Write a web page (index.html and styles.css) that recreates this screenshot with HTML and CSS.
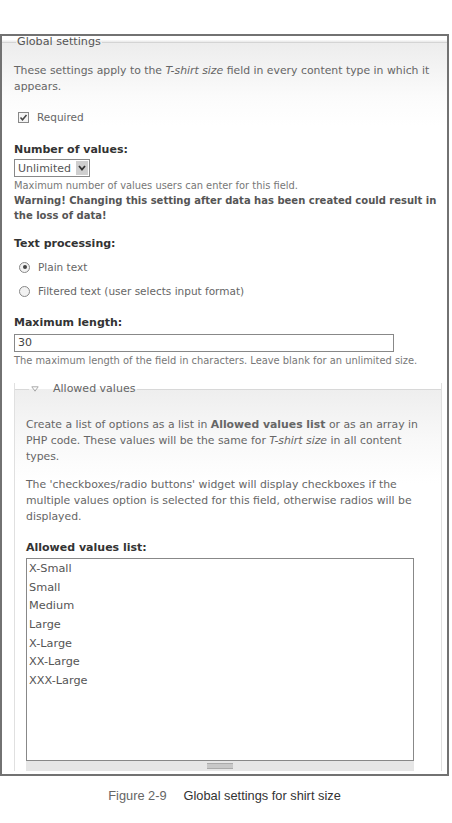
FILE: index.html
```html
<!DOCTYPE html>
<html>
<head>
<meta charset="utf-8">
<link rel="stylesheet" href="styles.css">
</head>
<body>
<div class="frame">
  <div class="gs-head"><span class="gs-title">Global settings</span></div>
  <div class="gs-body">
    <p class="intro">These settings apply to the <em>T-shirt size</em> field in every content type in which it appears.</p>
    <div class="option req"><span class="checkbox"><svg viewBox="0 0 11 11" width="11" height="11"><path d="M2.5 5.5 L4.5 7.8 L8.5 3" fill="none" stroke="#444" stroke-width="1.5"/></svg></span><span>Required</span></div>

    <div class="label lbl-num">Number of values:</div>
    <div class="select"><span class="select-val">Unlimited</span><span class="select-btn"><svg viewBox="0 0 10 8" width="10" height="8"><path d="M2 2 L5 5.5 L8 2" fill="none" stroke="#333" stroke-width="1.8"/></svg></span></div>
    <div class="desc">Maximum number of values users can enter for this field.</div>
    <div class="warn">Warning! Changing this setting after data has been created could result in the loss of data!</div>

    <div class="label lbl-tp">Text processing:</div>
    <div class="option radio-row first"><span class="radio checked"></span><span>Plain text</span></div>
    <div class="option radio-row"><span class="radio"></span><span>Filtered text (user selects input format)</span></div>

    <div class="label lbl-ml">Maximum length:</div>
    <div class="textinput">30</div>
    <div class="desc desc-ml">The maximum length of the field in characters. Leave blank for an unlimited size.</div>

    <div class="av">
      <div class="av-head"><span class="av-title"><span class="tri"><svg viewBox="0 0 8 6" width="8" height="6"><path d="M0.8 0.8 H7.2 L4 5.2 Z" fill="none" stroke="#aaa" stroke-width="1"/></svg></span>Allowed values</span></div>
      <div class="av-body">
        <p class="av-p1">Create a list of options as a list in <b>Allowed values list</b> or as an array in PHP code. These values will be the same for <em>T-shirt size</em> in all content types.</p>
        <p class="av-p2">The 'checkboxes/radio buttons' widget will display checkboxes if the multiple values option is selected for this field, otherwise radios will be displayed.</p>
        <div class="label lbl-av">Allowed values list:</div>
        <div class="textarea">X-Small<br>Small<br>Medium<br>Large<br>X-Large<br>XX-Large<br>XXX-Large</div>
        <div class="grippie"><span class="grip"></span></div>
      </div>
    </div>
  </div>
</div>
<div class="caption"><span class="fig">Figure 2-9</span><span class="cap">Global settings for shirt size</span></div>
</body>
</html>
```

FILE: styles.css
```css
html, body {
  margin: 0;
  padding: 0;
  background: #fff;
}
body {
  font-family: "DejaVu Sans", Verdana, sans-serif;
  color: #666;
  font-size: 10.85px;
}
.frame {
  box-sizing: border-box;
  margin-top: 34px;
  width: 449px;
  height: 742px;
  border: 2px solid #727272;
  overflow: hidden;
  background: linear-gradient(#fff 0, #fff 4px, #ececec 5px, #fbfbfb 60px, #fff 90px);
}
.gs-head {
  display: flex;
  align-items: center;
  height: 12px;
}
.gs-head::before {
  content: "";
  width: 14px;
  border-top: 1px solid #d4d4d4;
}
.gs-head::after {
  content: "";
  flex: 1;
  border-top: 1px solid #d4d4d4;
}
.gs-title {
  padding: 0 1px;
  color: #555;
  font-size: 11.2px;
  line-height: 12px;
}
.gs-body {
  padding-left: 12px;
}
p {
  margin: 0;
}
.intro {
  margin-top: 15px;
  line-height: 16px;
  width: 425px;
}
.option {
  display: flex;
  align-items: center;
  height: 16px;
  line-height: 16px;
  font-size: 10.5px;
}
.req {
  margin-top: 14px;
  padding-left: 4px;
}
.checkbox {
  box-sizing: border-box;
  width: 11px;
  height: 11px;
  border: 1px solid #888;
  background: #f4f4f4;
  margin-right: 8px;
  display: flex;
}
.checkbox svg {
  margin: -1px;
}
.label {
  font-weight: bold;
  color: #333;
  font-size: 11px;
  line-height: 16px;
}
.lbl-num { margin-top: 17px; }
.select {
  box-sizing: border-box;
  margin-top: 1px;
  width: 76px;
  height: 18px;
  border: 1px solid #888;
  display: flex;
  align-items: center;
  justify-content: space-between;
  background: #fff;
  font-size: 11px;
  color: #555;
}
.select-val {
  padding-left: 3px;
}
.select-btn {
  width: 12px;
  height: 14px;
  margin-right: 1px;
  background: #cfcfcf;
  display: flex;
  align-items: center;
  justify-content: center;
}
.desc {
  font-size: 9.9px;
  line-height: 15px;
  color: #777;
  margin-top: 1px;
}
.desc-ml {
  margin-top: 1px;
}
.warn {
  font-size: 10px;
  line-height: 15px;
  font-weight: bold;
  color: #555;
  width: 425px;
}
.lbl-tp { margin-top: 13px; }
.radio-row {
  margin-top: 8px;
  padding-left: 5px;
}
.radio-row.first {
  margin-top: 7px;
}
.radio {
  box-sizing: border-box;
  width: 11px;
  height: 11px;
  border-radius: 50%;
  border: 1px solid #888;
  background: #f2f2f2;
  margin-right: 8px;
  position: relative;
}
.radio.checked::after {
  content: "";
  position: absolute;
  left: 2.5px;
  top: 2.5px;
  width: 4px;
  height: 4px;
  border-radius: 50%;
  background: #444;
}
.lbl-ml { margin-top: 16px; }
.textinput {
  box-sizing: border-box;
  margin-top: 3px;
  width: 380px;
  height: 18px;
  border: 1px solid #888;
  background: #fff;
  font-size: 11px;
  line-height: 16px;
  padding-left: 3px;
  color: #444;
}
.av {
  margin-top: 15px;
  width: 428px;
  box-sizing: border-box;
  border-left: 1px solid #e0e0e0;
  border-right: 1px solid #e0e0e0;
  background: linear-gradient(#fff 0, #fff 6px, #eeeeee 6px, #f9f9f9 60px, #fff 100px);
}
.av-head {
  display: flex;
  align-items: center;
  height: 12px;
}
.av-head::before {
  content: "";
  width: 14px;
  border-top: 1px solid #d8d8d8;
}
.av-head::after {
  content: "";
  flex: 1;
  border-top: 1px solid #d8d8d8;
}
.av-title {
  display: flex;
  align-items: center;
  font-size: 11px;
  line-height: 12px;
  color: #666;
  padding: 0 2px;
}
.tri {
  display: flex;
  margin-right: 14px;
}
.av-body {
  padding-left: 11px;
}
.av-p1 {
  margin-top: 22px;
  line-height: 16px;
  width: 395px;
}
.av-p2 {
  margin-top: 12px;
  line-height: 16px;
  width: 395px;
}
.lbl-av { margin-top: 15px; }
.textarea {
  box-sizing: border-box;
  margin-top: 2px;
  width: 388px;
  height: 203px;
  border: 1px solid #888;
  background: #fff;
  padding: 1px 2px;
  font-size: 11.3px;
  line-height: 18.67px;
  color: #555;
}
.grippie {
  width: 388px;
  height: 10px;
  background: #e6e6e6;
  display: flex;
  justify-content: center;
  align-items: center;
}
.grip {
  width: 26px;
  height: 4px;
  border-top: 1px solid #aaa;
  border-bottom: 1px solid #aaa;
  background: #c8c8c8;
}
.caption {
  width: 449px;
  margin-top: 13px;
  text-align: center;
  font-family: "Liberation Sans", Arial, sans-serif;
  font-size: 12.8px;
  line-height: 14px;
}
.fig {
  color: #666;
  margin-right: 17px;
}
.cap {
  color: #333;
}
```
